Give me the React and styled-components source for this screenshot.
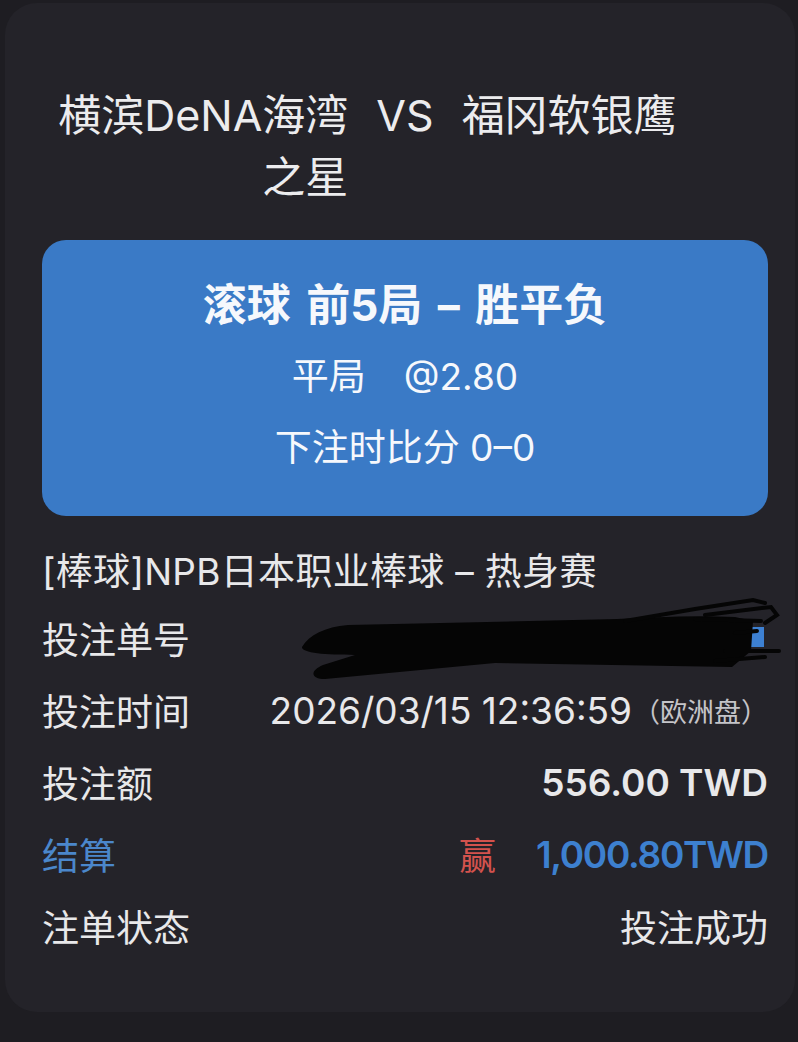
import styled, { createGlobalStyle } from "styled-components";

const GlobalStyle = createGlobalStyle`
    html, body {
        margin: 0;
        background: #1e1d22;
    }
    body {
        font-family: Inter, "Noto Sans CJK SC", sans-serif;
        -webkit-font-smoothing: antialiased;
    }
`;

const Card = styled.div`
    margin: 3px 3px 0 5px;
    padding: 81px 27px 50px 37px;
    background: #242329;
    border-radius: 32px;
`;

const Teams = styled.div`
    display: grid;
    grid-template-columns: 1fr auto 1fr;
    column-gap: 28px;
    font-size: 43px;
    line-height: 62px;
    color: #ececee;
`;

const Team = styled.div`
    text-align: ${(p) => (p.$side === "home" ? "right" : "left")};
`;

const Versus = styled.div``;

const BetBox = styled.div`
    margin-top: 32px;
    padding: 30px 0 33px;
    background: #3a7ac6;
    border-radius: 24px;
    text-align: center;
    color: #f6f8fc;
`;

const BetTitle = styled.div`
    font-size: 44px;
    font-weight: 700;
    line-height: 71px;
    word-spacing: 5px;
`;

const BetLine = styled.div`
    font-size: 37px;
    line-height: 71px;
`;

const Odds = styled.span`
    margin-left: 38px;
`;

const Details = styled.div`
    margin-top: 20px;
`;

const Row = styled.div`
    display: flex;
    align-items: center;
    justify-content: space-between;
    height: ${(p) => p.$h || 72}px;
    font-size: 37px;
    color: #e8e8ea;
`;

const Label = styled.span`
    color: ${(p) => (p.$accent ? "#4b87cb" : "#e8e8ea")};
    letter-spacing: ${(p) => (p.$wide ? "0.3px" : "0")};
`;

const Value = styled.span`
    display: flex;
    align-items: center;
    font-weight: ${(p) => (p.$bold ? 600 : 400)};
    color: ${(p) => (p.$accent ? "#3d80cf" : "#e8e8ea")};
`;

const Amount = styled.span`
    letter-spacing: -1.3px;
`;

const Note = styled.span`
    font-size: 27px;
    color: #c4c4c8;
    margin-left: 1px;
`;

const Win = styled.span`
    margin-right: 40px;
    font-weight: 400;
    color: #d3524d;
`;

const Scribble = styled.svg`
    display: block;
    margin: -7px -17px -7px 0;
`;

const BetNumber = () => (
    <Scribble width="490" height="86" viewBox="0 0 490 86">
        <path d="M455,32 h14 v20 h-14 z" fill="#3d80d2" />
        <path
            d="M7,52 C14,40 30,32 53,30 L322,24 C360,22 400,20 440,22 L458,26 L456,56 L437,72 L200,68 L30,84 C16,84 14,76 28,70 L60,60 C30,60 6,58 7,52 Z"
            fill="#050505"
        />
        <g stroke="#050505" strokeWidth="4" strokeLinecap="round" fill="none">
            <path d="M330,26 L400,14 L458,5 L470,8" />
            <path d="M410,20 L476,12 L482,20 L470,28" />
            <path d="M440,38 L462,36" />
            <path d="M430,56 L484,56" />
            <path d="M400,24 L466,26" />
            <path d="M420,66 L470,62" />
        </g>
    </Scribble>
);

const App = () => {
    return (
        <>
            <GlobalStyle />
            <Card>
                <Teams>
                    <Team $side="home">横滨DeNA海湾之星</Team>
                    <Versus>VS</Versus>
                    <Team $side="away">福冈软银鹰</Team>
                </Teams>

                <BetBox>
                    <BetTitle>滚球 前5局 – 胜平负</BetTitle>
                    <BetLine>
                        平局<Odds>@2.80</Odds>
                    </BetLine>
                    <BetLine>下注时比分 0–0</BetLine>
                </BetBox>

                <Details>
                    <Row $h={66}>
                        <Label $wide>[棒球]NPB日本职业棒球 – 热身赛</Label>
                    </Row>
                    <Row>
                        <Label>投注单号</Label>
                        <BetNumber />
                    </Row>
                    <Row>
                        <Label>投注时间</Label>
                        <Value>
                            2026/03/15 12:36:59<Note>（欧洲盘）</Note>
                        </Value>
                    </Row>
                    <Row>
                        <Label>投注额</Label>
                        <Value $bold>556.00 TWD</Value>
                    </Row>
                    <Row>
                        <Label $accent>结算</Label>
                        <Value $bold $accent>
                            <Win>赢</Win>
                            <Amount>1,000.80TWD</Amount>
                        </Value>
                    </Row>
                    <Row>
                        <Label>注单状态</Label>
                        <Value>投注成功</Value>
                    </Row>
                </Details>
            </Card>
        </>
    );
};

export default App;
